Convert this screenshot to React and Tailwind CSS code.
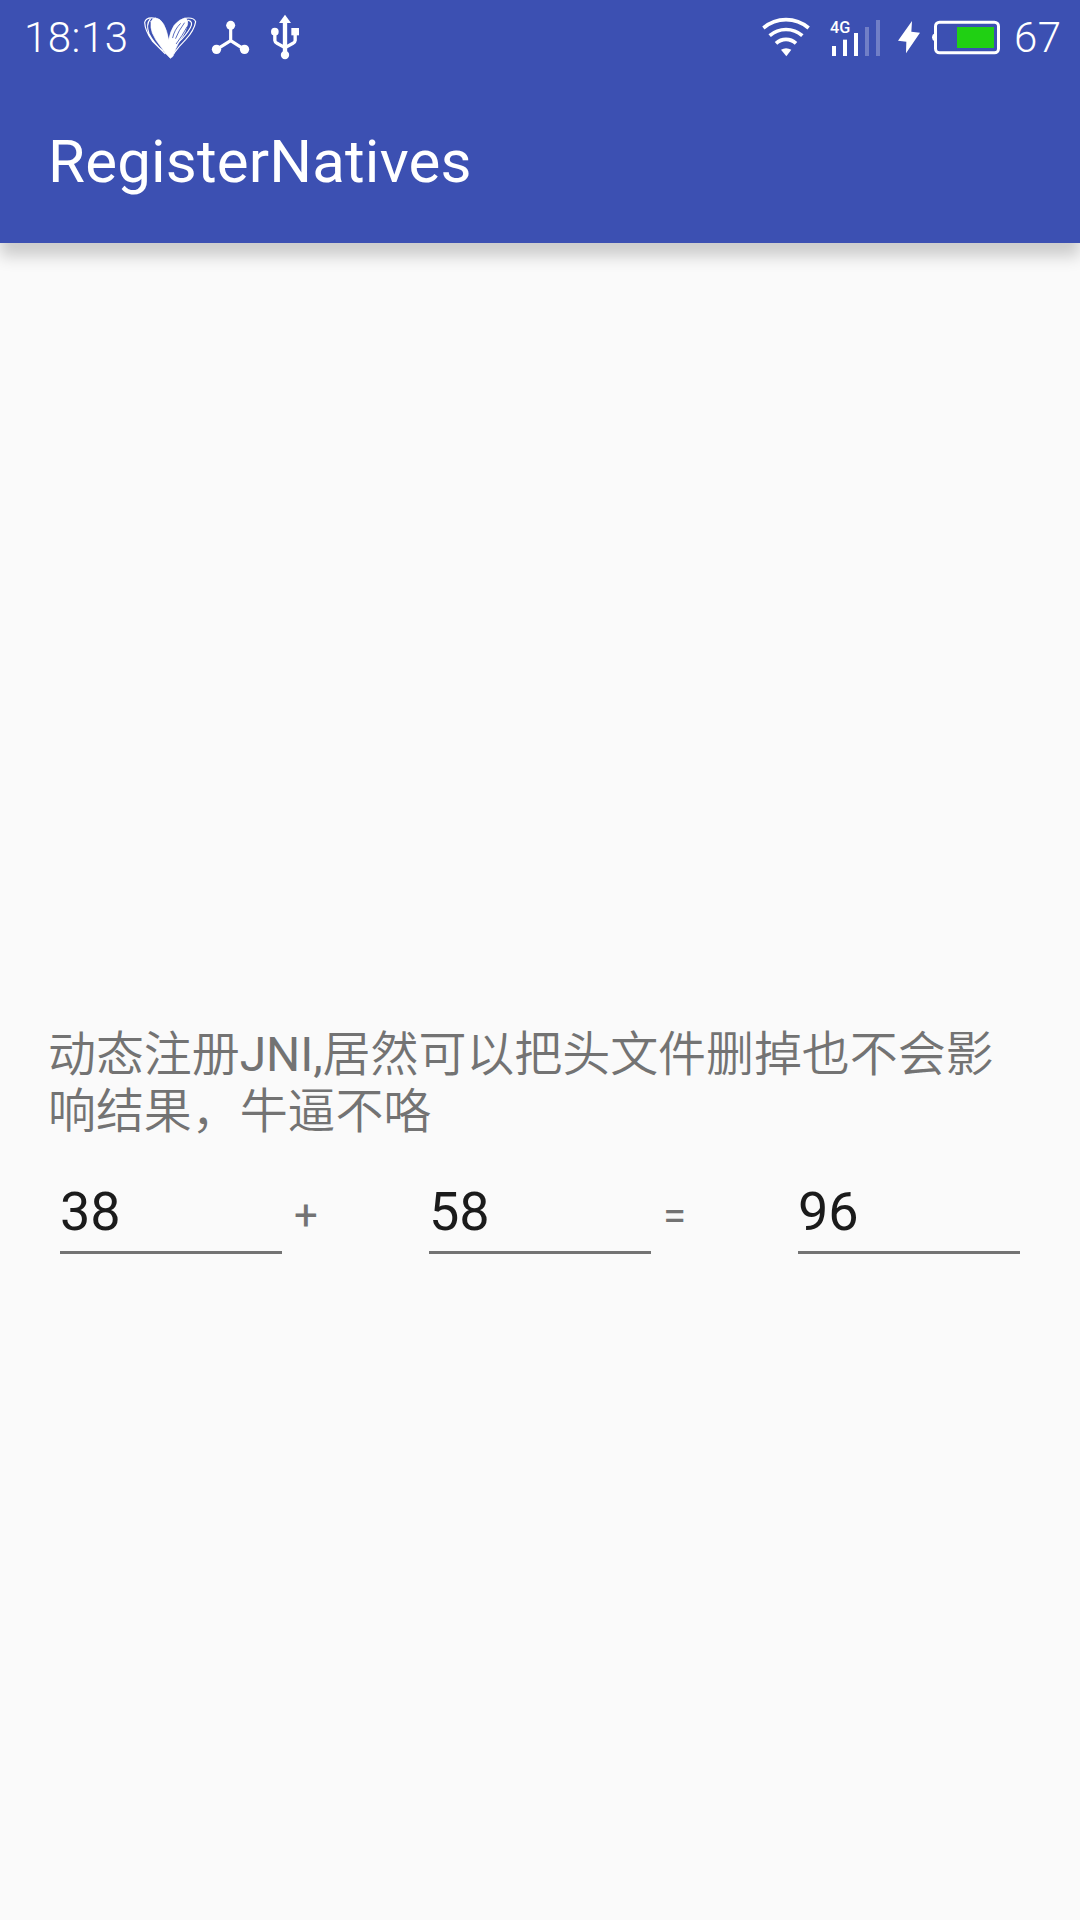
function HeartIcon() {
  return (
    <svg className="ml-[12px] h-16 w-[60px]" viewBox="9 0 180 192" fill="none" stroke="#fff" strokeLinecap="round" strokeLinejoin="round">
      <path fill="#fff" strokeWidth="2" d="M48 50 Q52 40 62 39 Q76 40 86 58 Q96 76 101 106 Q106 78 118 60 Q134 42 150 39 Q160 42 158 56 Q154 80 136 104 Q120 132 114 154 L106 160 Q90 146 78 126 Q60 104 52 84 Q46 68 48 50 Z" />
      <path strokeWidth="3.500" d="M62 40 Q34 34 29 52 Q30 78 52 108 M46 42 Q32 58 42 86 Q56 114 84 138 M52 108 L90 146" />
      <path strokeWidth="3.500" d="M150 40 Q176 36 182 50 Q178 76 152 104 Q130 126 116 146 M160 46 Q176 50 166 68 Q154 90 130 112" />
      <path stroke="#3c50b2" strokeWidth="2.500" d="M136 56 Q118 74 113 98 M148 54 Q130 78 122 100 M156 66 Q142 92 124 116" />
    </svg>
  );
}

function HubIcon() {
  return (
    <svg className="ml-[10px] h-16 w-[45px]" viewBox="219 0 135 192" fill="#fff">
      <path d="M287 62 V107 M287 107 L245 133 M287 107 L328 133" stroke="#fff" strokeWidth="9.500" />
      <circle cx="287" cy="61" r="13.500" />
      <circle cx="244.500" cy="133" r="14" />
      <circle cx="328.500" cy="133" r="14" />
    </svg>
  );
}

function UsbIcon() {
  return (
    <svg className="ml-[15px] h-16 w-[35px]" viewBox="399 0 105 192" fill="#fff">
      <path d="M450 29 L468 54 H432 Z" />
      <rect x="443.500" y="50" width="13" height="95" />
      <circle cx="450" cy="150" r="12.500" />
      <circle cx="419.500" cy="80" r="11.500" />
      <rect x="469" y="69" width="23" height="22" />
      <path d="M419.500 84 V106 Q420 112 426 115 L450 128 L474 115 Q480 112 480.500 106 V84" fill="none" stroke="#fff" strokeWidth="10" />
    </svg>
  );
}

function WifiIcon() {
  return (
    <svg className="h-16 w-[54px]" viewBox="27 0 162 192" fill="none" stroke="#fff">
      <path d="M40 69 Q70 44 108 44 Q146 44 176 69" strokeWidth="11" />
      <path d="M59 92 Q80 73.500 108 73.500 Q136 73.500 157 92" strokeWidth="11" />
      <path d="M78 115 Q91 103 108 103 Q125 103 138 115" strokeWidth="11" />
      <path d="M93 134 Q108 125 124 134 L109 154 Z" fill="#fff" stroke="none" />
    </svg>
  );
}

function SignalIcon() {
  return (
    <svg className="ml-[15px] h-16 w-[54px]" viewBox="234 0 162 192" fill="#fff">
      <text x="240" y="83" fontSize="49" fontWeight="500" textLength="61" lengthAdjust="spacingAndGlyphs">4G</text>
      <rect x="246" y="123" width="12" height="30" />
      <rect x="279" y="104" width="12" height="49" />
      <rect x="312" y="84" width="12" height="69" />
      <g opacity="0.270">
        <rect x="345" y="66" width="12" height="87" />
        <rect x="378" y="45" width="12" height="108" />
      </g>
    </svg>
  );
}

function BoltIcon() {
  return (
    <svg className="ml-[13px] h-16 w-[28px]" viewBox="45 0 84 192" fill="#fff">
      <path d="M96 48 L54 107 L79 110 L78 145 L120 83 L94 80 Z" />
    </svg>
  );
}

function BatteryIcon() {
  return (
    <svg className="ml-[7px] h-16 w-[72px]" viewBox="150 0 216 192">
      <path d="M164 85 Q156 88 156 97 Q156 106 164 109 Z" fill="#fff" />
      <rect x="166.500" y="51.500" width="189" height="92" rx="12" fill="none" stroke="#fff" strokeWidth="9" />
      <rect x="231" y="66" width="111" height="63" fill="#20d013" />
    </svg>
  );
}

function Field({ value }) {
  return (
    <div className="w-[246px] px-3">
      <div className="h-[72px] border-b-3 border-[#737373] text-[54px] leading-[60px] text-[#1b1b1b]">{value}</div>
    </div>
  );
}

function Operator({ children }) {
  return <div className="w-[123px] pt-[10px] text-[42px] leading-[48px] text-[#737373]">{children}</div>;
}

export default function App() {
  return (
    <div className="flex h-[1920px] w-[1080px] flex-col overflow-hidden bg-[#fafafa] font-['Roboto','Noto_Sans_CJK_SC',sans-serif]">
      <header className="h-[243px] shrink-0 bg-[#3c50b2] text-white shadow-[0_13px_15px_0_rgba(0,0,0,0.19)]">
        <div className="flex h-[75px] items-start justify-between pt-[5px] pr-[18px] pl-[24px]">
          <div className="flex">
            <span className="w-[102px] pt-[9px] text-[42px] leading-[48px] font-light tracking-[0.5px] whitespace-nowrap">18:13</span>
            <HeartIcon />
            <HubIcon />
            <UsbIcon />
          </div>
          <div className="flex">
            <WifiIcon />
            <SignalIcon />
            <BoltIcon />
            <BatteryIcon />
            <span className="ml-[12px] w-[48px] pt-[9px] text-[42px] leading-[48px] font-light tracking-[0.5px] whitespace-nowrap">67</span>
          </div>
        </div>
        <h1 className="flex h-[168px] items-center px-12 pt-[5px] text-[60px] leading-[60px] tracking-[0.18px]">RegisterNatives</h1>
      </header>
      <main className="px-12 pt-[783px]">
        <p className="text-[48px] leading-[57px] font-[350] tracking-[-0.08px] text-[#737373]">
          动态注册<span className="font-normal">JNI,</span>居然可以把头文件删掉也不会影
          <br />
          响结果，牛逼不咯
        </p>
        <div className="mt-[42px] flex">
          <Field value="38" />
          <Operator>+</Operator>
          <Field value="58" />
          <Operator>=</Operator>
          <Field value="96" />
        </div>
      </main>
    </div>
  );
}
